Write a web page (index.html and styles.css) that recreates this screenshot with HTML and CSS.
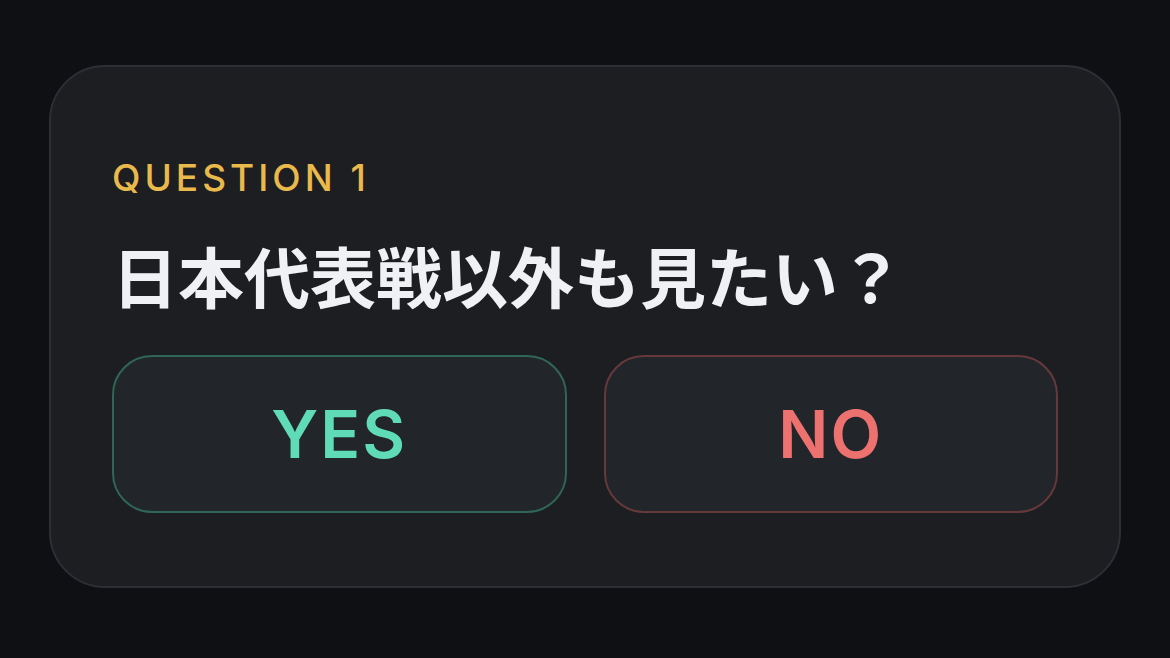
FILE: index.html
```html
<!DOCTYPE html>
<html>

<head>
  <title>Question</title>
  <link rel="stylesheet" href="styles.css">
</head>

<body>
  <div class="card">
    <div class="label">QUESTION 1</div>
    <h1 class="question">日本代表戦以外も見たい？</h1>
    <div class="answers">
      <button class="answer yes">YES</button>
      <button class="answer no">NO</button>
    </div>
  </div>
</body>

</html>
```

FILE: styles.css
```css
body {
  display: flex;
  justify-content: center;
  align-items: center;
  height: 658px;
  margin: 0;
  padding: 0;
  background-color: #0e1014;
  font-family: Inter, "Noto Sans CJK JP", sans-serif;
}

.card {
  box-sizing: border-box;
  width: 1072px;
  height: 523px;
  margin-bottom: 5px;
  padding: 88px 61px 0 61px;
  background-color: #1c1e22;
  border: 2px solid #2c2f34;
  border-radius: 56px;
}

.label {
  font-size: 37px;
  line-height: 46px;
  font-weight: 500;
  letter-spacing: 4px;
  color: #e9b94b;
}

.question {
  margin: 31px 0 0 0;
  font-family: "Noto Sans CJK JP", sans-serif;
  font-size: 66px;
  line-height: 84px;
  font-weight: 700;
  color: #f0f1f5;
}

.answers {
  display: flex;
  gap: 37px;
  margin-top: 39px;
}

.answer {
  flex: 1;
  height: 158px;
  background-color: #22252a;
  border: 2px solid;
  border-radius: 40px;
  font-family: Inter, sans-serif;
  font-size: 66px;
  font-weight: 600;
  letter-spacing: 2px;
}

.yes {
  border-color: #2f6656;
  color: #5fdcb5;
}

.no {
  border-color: #66393b;
  color: #ec716f;
}
```
